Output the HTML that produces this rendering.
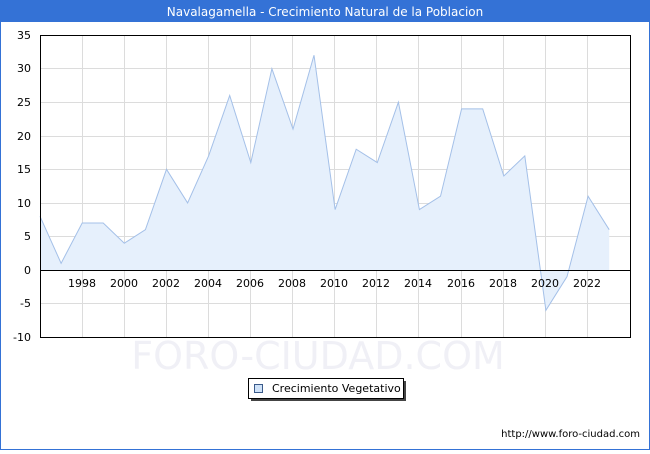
<!DOCTYPE html>
<html><head><meta charset="utf-8"><style>
body{margin:0;width:650px;height:450px;overflow:hidden;background:#fff;font-family:"DejaVu Sans","Liberation Sans",sans-serif}
</style></head><body>
<svg width="650" height="450" xmlns="http://www.w3.org/2000/svg" font-family="DejaVu Sans, Liberation Sans, sans-serif">
<rect x="0.5" y="0.5" width="649" height="449" fill="#fff" stroke="#3472d6"/>
<rect x="0" y="0" width="650" height="22" fill="#3472d6"/>
<text x="325" y="16" fill="#fff" font-size="12" text-anchor="middle">Navalagamella - Crecimiento Natural de la Poblacion</text>
<g stroke="#dcdcdc" stroke-width="1">
<line x1="40" x2="630" y1="68.5" y2="68.5"/><line x1="40" x2="630" y1="102.5" y2="102.5"/><line x1="40" x2="630" y1="136.5" y2="136.5"/><line x1="40" x2="630" y1="169.5" y2="169.5"/><line x1="40" x2="630" y1="203.5" y2="203.5"/><line x1="40" x2="630" y1="236.5" y2="236.5"/><line x1="40" x2="630" y1="303.5" y2="303.5"/>
<line x1="82.5" x2="82.5" y1="35" y2="337"/><line x1="124.5" x2="124.5" y1="35" y2="337"/><line x1="166.5" x2="166.5" y1="35" y2="337"/><line x1="208.5" x2="208.5" y1="35" y2="337"/><line x1="250.5" x2="250.5" y1="35" y2="337"/><line x1="292.5" x2="292.5" y1="35" y2="337"/><line x1="334.5" x2="334.5" y1="35" y2="337"/><line x1="376.5" x2="376.5" y1="35" y2="337"/><line x1="418.5" x2="418.5" y1="35" y2="337"/><line x1="461.5" x2="461.5" y1="35" y2="337"/><line x1="503.5" x2="503.5" y1="35" y2="337"/><line x1="545.5" x2="545.5" y1="35" y2="337"/><line x1="587.5" x2="587.5" y1="35" y2="337"/>
</g>
<text x="318" y="369" font-size="38" fill="#f0f0f6" text-anchor="middle">FORO-CIUDAD.COM</text>
<polygon fill="#e6f0fc" points="40,270 40,216.3 61.1,263.3 82.2,223 103.2,223 124.3,243.2 145.4,229.7 166.5,169.3 187.6,202.9 208.6,155.9 229.7,95.5 250.8,162.6 271.9,68.7 293,129.1 314,55.2 335.1,209.6 356.2,149.2 377.3,162.6 398.4,102.2 419.4,209.6 440.5,196.2 461.6,108.9 482.7,108.9 503.8,176 524.8,155.9 545.9,310.3 567,276.7 588.1,196.2 609.2,229.7 609.2,270"/>
<polyline fill="none" stroke="#a4c0e8" stroke-width="1" points="40,216.3 61.1,263.3 82.2,223 103.2,223 124.3,243.2 145.4,229.7 166.5,169.3 187.6,202.9 208.6,155.9 229.7,95.5 250.8,162.6 271.9,68.7 293,129.1 314,55.2 335.1,209.6 356.2,149.2 377.3,162.6 398.4,102.2 419.4,209.6 440.5,196.2 461.6,108.9 482.7,108.9 503.8,176 524.8,155.9 545.9,310.3 567,276.7 588.1,196.2 609.2,229.7"/>
<line x1="40" x2="630" y1="270.5" y2="270.5" stroke="#000"/>
<rect x="40.5" y="35.5" width="590" height="302" fill="none" stroke="#000"/>
<g font-size="11" fill="#000" text-anchor="end">
<text x="31" y="39">35</text><text x="31" y="72">30</text><text x="31" y="106">25</text><text x="31" y="140">20</text><text x="31" y="173">15</text><text x="31" y="207">10</text><text x="31" y="240">5</text><text x="31" y="274">0</text><text x="31" y="307">-5</text><text x="31" y="341">-10</text>
</g>
<g font-size="11" fill="#000" text-anchor="middle">
<text x="82" y="287">1998</text><text x="124" y="287">2000</text><text x="166" y="287">2002</text><text x="208" y="287">2004</text><text x="250" y="287">2006</text><text x="292" y="287">2008</text><text x="334" y="287">2010</text><text x="376" y="287">2012</text><text x="418" y="287">2014</text><text x="461" y="287">2016</text><text x="503" y="287">2018</text><text x="545" y="287">2020</text><text x="587" y="287">2022</text>
</g>
<rect x="251" y="381" width="155" height="20" fill="#444"/>
<rect x="248.5" y="378.5" width="155" height="20" fill="#fff" stroke="#000"/>
<rect x="254.5" y="384.5" width="8" height="8" fill="#cfe2f8" stroke="#3a5a8a"/>
<text x="272" y="392" font-size="11">Crecimiento Vegetativo</text>
<text x="640" y="437" font-size="10" text-anchor="end">http://www.foro-ciudad.com</text>
</svg>
</body></html>
